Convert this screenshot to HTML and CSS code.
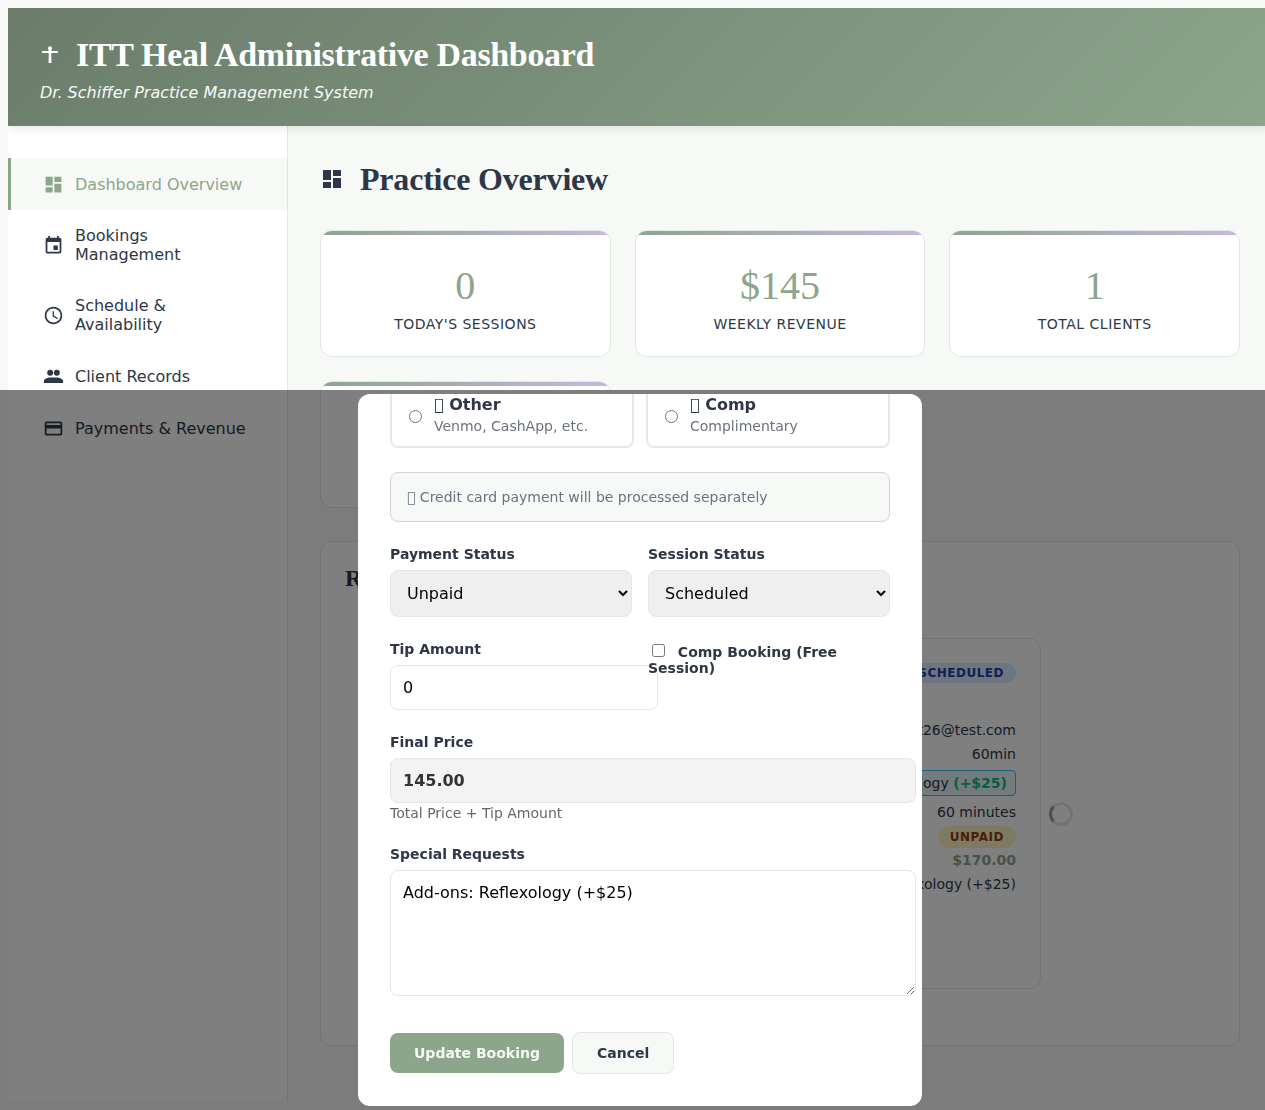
FILE: index.html
```html
<!DOCTYPE html>
<html>
<head>
    <title>ITT Heal Administrative Dashboard</title>
    <link rel="stylesheet" href="styles.css">
</head>
<body>
<div class="app">
    <div class="top-header">
        <h1 class="brand">
            <svg class="brand-icon" viewBox="0 0 20 20"><path d="M8.700 5h2.600l.2 1h5.700a1 1 0 0 1 0 2h-5.700l-.3 1.500.3 8.500H8.500l.3-8.500L8.500 8H2.800a1 1 0 0 1 0-2h5.700z"/><circle cx="10" cy="3.200" r="2"/></svg>
            ITT Heal Administrative Dashboard
        </h1>
        <p class="brand-sub">Dr. Schiffer Practice Management System</p>
    </div>

    <div class="layout">
        <nav class="sidebar">
            <a class="nav-item active">
                <span class="nav-icon"><svg viewBox="0 0 24 24"><path d="M3 13h8V3H3v10zm0 8h8v-6H3v6zm10 0h8V11h-8v10zm0-18v6h8V3h-8z"/></svg></span>
                <span>Dashboard Overview</span>
            </a>
            <a class="nav-item">
                <span class="nav-icon"><svg viewBox="0 0 24 24"><path d="M17 12h-5v5h5v-5zM16 1v2H8V1H6v2H5c-1.11 0-1.99.9-1.99 2L3 19c0 1.1.89 2 2 2h14c1.1 0 2-.9 2-2V5c0-1.1-.9-2-2-2h-1V1h-2zm3 18H5V8h14v11z"/></svg></span>
                <span>Bookings Management</span>
            </a>
            <a class="nav-item">
                <span class="nav-icon"><svg viewBox="0 0 24 24"><path d="M11.99 2C6.47 2 2 6.48 2 12s4.47 10 9.99 10C17.52 22 22 17.52 22 12S17.52 2 11.99 2zM12 20c-4.42 0-8-3.58-8-8s3.58-8 8-8 8 3.58 8 8-3.58 8-8 8zm.5-13H11v6l5.25 3.15.75-1.23-4.5-2.67z"/></svg></span>
                <span>Schedule &amp; Availability</span>
            </a>
            <a class="nav-item">
                <span class="nav-icon"><svg viewBox="0 0 24 24"><circle cx="8.200" cy="7.800" r="3.400"/><circle cx="15.800" cy="7.800" r="3.400"/><path d="M1 19.500V17c0-2.600 4.500-4 7-4h8c2.500 0 7 1.400 7 4v2.500z"/></svg></span>
                <span>Client Records</span>
            </a>
            <a class="nav-item">
                <span class="nav-icon"><svg viewBox="0 0 24 24"><path d="M20 4H4c-1.11 0-1.99.89-1.99 2L2 18c0 1.11.89 2 2 2h16c1.11 0 2-.89 2-2V6c0-1.11-.89-2-2-2zm0 14H4v-6h16v6zm0-10H4V6h16v2z"/></svg></span>
                <span>Payments &amp; Revenue</span>
            </a>
        </nav>

        <main class="main">
            <h2 class="page-title">
                <svg class="page-icon" viewBox="0 0 24 24"><path d="M3 13h8V3H3v10zm0 8h8v-6H3v6zm10 0h8V11h-8v10zm0-18v6h8V3h-8z"/></svg>
                Practice Overview
            </h2>

            <div class="stats">
                <div class="stat-card"><div class="stat-value">0</div><div class="stat-label">Today's Sessions</div></div>
                <div class="stat-card"><div class="stat-value">$145</div><div class="stat-label">Weekly Revenue</div></div>
                <div class="stat-card"><div class="stat-value">1</div><div class="stat-label">Total Clients</div></div>
                <div class="stat-card"></div>
            </div>

            <section class="recent">
                <h3 class="recent-title">Recent Bookings</h3>
                <div class="booking-row">
                    <div class="booking-card">
                        <div class="line badge-line"><span class="badge badge-blue">Scheduled</span></div>
                        <div class="line first-line">client26@test.com</div>
                        <div class="line">60min</div>
                        <div class="line chip-line"><span class="chip">Reflexology <b>(+$25)</b></span></div>
                        <div class="line">60 minutes</div>
                        <div class="line unpaid-line"><span class="badge badge-amber">Unpaid</span></div>
                        <div class="line price">$170.00</div>
                        <div class="line">Add-ons: Reflexology (+$25)</div>
                    </div>
                    <div class="spinner"></div>
                </div>
            </section>
        </main>
    </div>
</div>

<div class="overlay">
    <div class="modal">
        <div class="modal-body">
            <div class="pay-options">
                <label class="pay-option">
                    <input type="radio" name="pay">
                    <span><span class="pay-name">&#x10FFFD; Other</span><span class="pay-desc">Venmo, CashApp, etc.</span></span>
                </label>
                <label class="pay-option">
                    <input type="radio" name="pay">
                    <span><span class="pay-name">&#x10FFFD; Comp</span><span class="pay-desc">Complimentary</span></span>
                </label>
            </div>

            <div class="pay-note">&#x10FFFD; Credit card payment will be processed separately</div>

            <div class="form-row">
                <div class="form-group">
                    <label class="form-label">Payment Status</label>
                    <select class="form-select"><option>Unpaid</option></select>
                </div>
                <div class="form-group">
                    <label class="form-label">Session Status</label>
                    <select class="form-select"><option>Scheduled</option></select>
                </div>
            </div>

            <div class="form-row">
                <div class="form-group">
                    <label class="form-label">Tip Amount</label>
                    <input class="form-input" type="text" value="0">
                </div>
                <div class="form-group">
                    <label class="check-label"><input class="check" type="checkbox"> Comp Booking (Free Session)</label>
                </div>
            </div>

            <div class="form-group">
                <label class="form-label">Final Price</label>
                <input class="form-input final" type="text" value="145.00" readonly>
                <div class="help">Total Price + Tip Amount</div>
            </div>

            <div class="form-group">
                <label class="form-label">Special Requests</label>
                <textarea class="form-input notes">Add-ons: Reflexology (+$25)</textarea>
            </div>

            <div class="form-actions">
                <button class="btn btn-primary">Update Booking</button>
                <button class="btn btn-cancel">Cancel</button>
            </div>
        </div>
    </div>
</div>
</body>
</html>
```

FILE: styles.css
```css
body {
margin: 8px 0 8px 8px;
background: #f7f9f7;
color: #2d3748;
font-family: "DejaVu Sans", sans-serif;
}
.app {
width: 1264px;
}
.top-header {
height: 118px;
box-sizing: border-box;
padding: 24px 32px;
color: #fff;
background: linear-gradient(135deg, #6b7c6b, #8ba68b);
box-shadow: 0 2px 10px rgba(0, 0, 0, 0.1);
position: relative;
}
.brand {
margin: 0;
font-family: "Liberation Serif", serif;
font-size: 34px;
font-weight: bold;
letter-spacing: -0.34px;
line-height: 46px;
display: flex;
align-items: center;
}
.brand-icon {
width: 20px;
height: 20px;
margin-right: 16px;
fill: #fff;
}
.brand-sub {
margin: 5px 0 0;
font-size: 16px;
font-style: italic;
line-height: 20px;
color: #f7f9f7;
}
.layout {
display: flex;
height: 976px;
}
.sidebar {
flex: none;
width: 280px;
box-sizing: border-box;
padding-top: 32px;
background: #fff;
border-right: 1px solid #e2e8e2;
}
.nav-item {
display: flex;
align-items: center;
padding: 16px 32px 16px 30px;
border-left: 3px solid transparent;
font-size: 16px;
color: #2d3748;
}
.nav-item.active {
background: #f7f9f7;
border-left-color: #8ba68b;
color: #8ba68b;
}
.nav-icon {
flex: none;
width: 24px;
height: 20px;
margin-right: 10px;
display: flex;
align-items: center;
justify-content: center;
}
.nav-icon svg {
width: 21px;
height: 21px;
fill: currentColor;
}
.main {
flex: none;
width: 984px;
box-sizing: border-box;
padding: 32px;
}
.page-title {
margin: 1px 0 31px;
display: flex;
align-items: center;
font-family: "Liberation Serif", serif;
font-size: 32px;
font-weight: bold;
letter-spacing: -0.2px;
line-height: 40px;
}
.page-icon {
width: 24px;
height: 24px;
margin-right: 16px;
fill: currentColor;
}
.stats {
display: grid;
grid-template-columns: repeat(3, 1fr);
gap: 24px;
margin-bottom: 33px;
}
.stat-card {
height: 127px;
box-sizing: border-box;
padding-top: 32px;
text-align: center;
background: #fff;
border: 1px solid #e2e8e2;
border-radius: 12px;
position: relative;
overflow: hidden;
}
.stat-card::before {
content: "";
position: absolute;
top: 0;
left: 0;
right: 0;
height: 4px;
background: linear-gradient(90deg, #8ba68b, #c8b6e2);
}
.stat-value {
font-family: "Liberation Serif", serif;
font-size: 40px;
line-height: 46px;
color: #8ba68b;
}
.stat-label {
margin-top: 6px;
font-size: 14px;
line-height: 18px;
letter-spacing: 0.5px;
text-transform: uppercase;
}
.recent {
height: 505px;
box-sizing: border-box;
padding: 24px;
background: #fff;
border: 1px solid #e2e8e2;
border-radius: 12px;
}
.recent-title {
margin: 0 0 47px;
font-family: "Liberation Serif", serif;
font-size: 24px;
line-height: 25px;
}
.booking-row {
display: flex;
align-items: center;
gap: 8px;
padding-left: 60px;
}
.booking-card {
width: 636px;
height: 351px;
box-sizing: border-box;
padding: 24px;
border: 1px solid #e2e8e2;
border-radius: 12px;
font-size: 14px;
text-align: right;
}
.line {
line-height: 16px;
padding: 4px 0;
}
.badge-line {
padding: 0;
height: 20px;
}
.first-line {
margin-top: 35px;
}
.chip-line {
height: 26px;
}
.unpaid-line {
padding: 2px 0 0;
height: 22px;
}
.badge {
display: inline-block;
padding: 3px 12px;
border-radius: 12px;
font-size: 12px;
font-weight: bold;
letter-spacing: 0.5px;
text-transform: uppercase;
}
.badge-blue {
background: #dbeafe;
color: #1e40af;
padding-top: 2px;
padding-bottom: 2px;
}
.badge-amber {
background: #fef3c7;
color: #92400e;
}
.chip {
display: inline-block;
padding: 4px 8px;
background: #e6f7fb;
border: 1px solid #38bdf8;
border-radius: 4px;
}
.chip b {
color: #10b981;
}
.price {
font-weight: bold;
color: #8ba68b;
}
.spinner {
width: 24px;
height: 24px;
box-sizing: border-box;
border: 3px solid #e2e8e2;
border-left-color: #8ba68b;
border-radius: 50%;
}

.overlay {
position: fixed;
top: 390px;
left: 0;
width: 1280px;
bottom: 0;
background: rgba(0, 0, 0, 0.5);
display: flex;
justify-content: center;
align-items: center;
}
.modal {
width: 564px;
height: 712px;
background: #fff;
border-radius: 12px;
overflow: hidden;
}
.modal-body {
width: 500px;
margin: -17px 32px 0;
}
.pay-options {
display: grid;
grid-template-columns: 1fr 1fr;
gap: 12px;
}
.pay-option {
display: flex;
align-items: center;
padding: 16px 16px 12px;
border: 2px solid #e2e8f0;
border-radius: 8px;
}
.pay-option input {
margin: 3px 12px 0 1px;
}
.pay-name {
display: block;
font-weight: bold;
font-size: 16px;
}
.pay-desc {
display: block;
margin-top: 4px;
font-size: 14px;
color: #6b7280;
}
.pay-note {
margin: 24px 0 24px;
padding: 16px;
background: #f7f9f7;
border: 1px solid #d1d5db;
border-radius: 8px;
font-size: 14px;
color: #6b7280;
}
.form-row {
display: grid;
grid-template-columns: 1fr 1fr;
gap: 16px;
}
.form-group {
margin-bottom: 24px;
}
.form-label {
display: block;
margin-bottom: 8px;
font-size: 14px;
font-weight: bold;
line-height: 16px;
}
.form-select {
display: block;
width: 100%;
padding: 12px;
font-family: inherit;
font-size: 16px;
color: #000;
border: 1px solid #e2e8e2;
border-radius: 8px;
}
.form-input {
display: block;
width: 100%;
padding: 12px;
font-family: inherit;
font-size: 16px;
border: 1px solid #e2e8e2;
border-radius: 8px;
}
.final {
background: #f3f3f3;
font-weight: bold;
color: #333;
}
.help {
margin-top: 1px;
font-size: 14px;
line-height: 18px;
color: #666;
}
.notes {
height: 100px;
}
.check-label {
display: block;
font-size: 14px;
font-weight: bold;
line-height: 16px;
}
.check {
margin-right: 8px;
}
.form-actions {
display: flex;
align-items: center;
gap: 8px;
margin-top: 36px;
}
.btn {
padding: 12px 24px;
font-family: inherit;
font-size: 14px;
font-weight: bold;
border-radius: 8px;
}
.btn-primary {
background: #8ba68b;
color: #f7f9f7;
border: 0;
}
.btn-cancel {
background: #f7f9f7;
color: #2d3748;
border: 1px solid #e2e8e2;
}
```
